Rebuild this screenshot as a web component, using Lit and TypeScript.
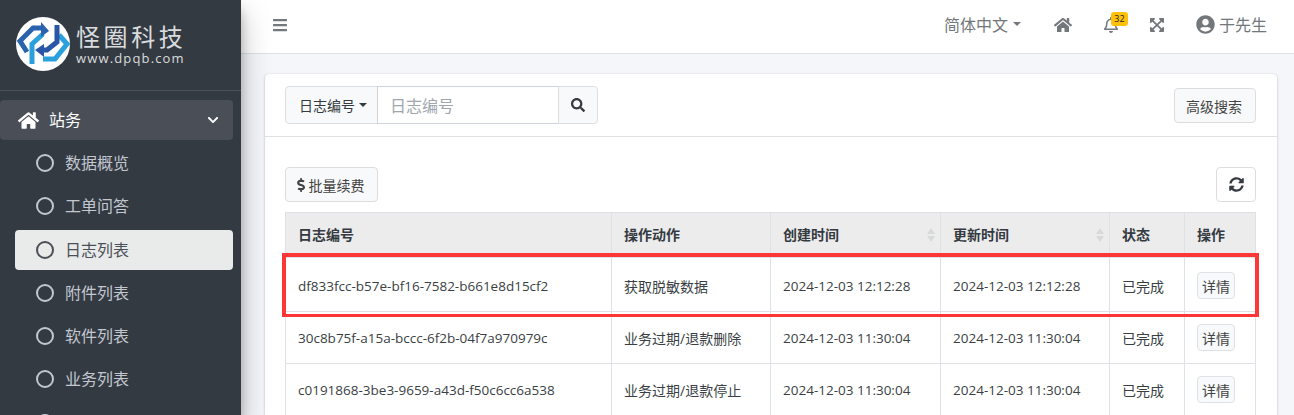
import { LitElement, html, css, svg } from "lit";
import { customElement } from "lit/decorators.js";

const P = {
  home: ["0 0 576 512", "M280.37 148.26L96 300.11V464a16 16 0 0 0 16 16l112.06-.29a16 16 0 0 0 15.92-16V368a16 16 0 0 1 16-16h64a16 16 0 0 1 16 16v95.64a16 16 0 0 0 16 16.05L464 480a16 16 0 0 0 16-16V300L295.67 148.26a12.19 12.19 0 0 0-15.3 0zM571.6 251.47L488 182.56V44.05a12 12 0 0 0-12-12h-56a12 12 0 0 0-12 12v72.61L318.47 43a48 48 0 0 0-61 0L4.34 251.47a12 12 0 0 0-1.6 16.9l25.5 31A12 12 0 0 0 45.15 301l235.22-193.74a12.19 12.19 0 0 1 15.3 0L530.9 301a12 12 0 0 0 16.9-1.6l25.5-31a12 12 0 0 0-1.7-16.93z"],
  search: ["0 0 512 512", "M505 442.7L405.3 343c-4.5-4.5-10.6-7-17-7H372c27.6-35.3 44-79.7 44-128C416 93.1 322.9 0 208 0S0 93.1 0 208s93.1 208 208 208c48.3 0 92.7-16.4 128-44v16.3c0 6.4 2.5 12.5 7 17l99.7 99.7c9.4 9.4 24.6 9.4 33.9 0l28.3-28.3c9.4-9.4 9.4-24.6.1-34zM208 336c-70.7 0-128-57.2-128-128 0-70.7 57.2-128 128-128 70.7 0 128 57.2 128 128 0 70.7-57.2 128-128 128z"],
  chevron: ["0 0 448 512", "M207.029 381.476L12.686 187.132c-9.373-9.373-9.373-24.569 0-33.941l22.667-22.667c9.357-9.357 24.522-9.375 33.901-.04L224 284.505l154.745-154.021c9.379-9.335 24.544-9.317 33.901.04l22.667 22.667c9.373 9.373 9.373 24.569 0 33.941L240.971 381.476c-9.373 9.372-24.569 9.372-33.942 0z"],
  user: ["0 0 496 512", "M248 8C111 8 0 119 0 256s111 248 248 248 248-111 248-248S385 8 248 8zm0 96c48.6 0 88 39.4 88 88s-39.4 88-88 88-88-39.4-88-88 39.4-88 88-88zm0 344c-58.7 0-111.3-26.6-146.5-68.2 18.8-35.4 55.6-59.8 98.5-59.8 2.4 0 4.8.4 7.1 1.1 13 4.2 26.6 6.9 40.9 6.9 14.3 0 28-2.7 40.9-6.9 2.3-.7 4.7-1.1 7.1-1.1 42.9 0 79.7 24.4 98.5 59.8C359.3 421.4 306.7 448 248 448z"],
  sync: ["0 0 512 512", "M370.72 133.28C339.458 104.008 298.888 87.962 255.848 88c-77.458.068-144.328 53.178-162.791 126.85-1.344 5.363-6.122 9.15-11.651 9.15H24.103c-7.498 0-13.194-6.807-11.807-14.176C33.933 94.924 134.813 8 256 8c66.448 0 126.791 26.136 171.315 68.685L463.03 40.97C478.149 25.851 504 36.559 504 57.941V192c0 13.255-10.745 24-24 24H345.941c-21.382 0-32.09-25.851-16.971-40.971l41.75-41.749zM32 296h134.059c21.382 0 32.09 25.851 16.971 40.971l-41.75 41.75c31.262 29.273 71.835 45.319 114.876 45.28 77.418-.07 144.315-53.144 162.787-126.849 1.344-5.363 6.122-9.15 11.651-9.15h57.304c7.498 0 13.194 6.807 11.807 14.176C478.067 417.076 377.187 504 256 504c-66.448 0-126.791-26.136-171.315-68.685L48.97 471.03C33.851 486.149 8 475.441 8 454.059V320c0-13.255 10.745-24 24-24z"],
  expand: ["0 0 448 512", "M448 344v112a23.94 23.94 0 0 1-24 24H312c-21.39 0-32.09-25.9-17-41l36.2-36.2L224 295.6 116.77 402.9 153 439c15.09 15.1 4.39 41-17 41H24a23.94 23.94 0 0 1-24-24V344c0-21.4 25.89-32.1 41-17l36.19 36.2L184.46 256 77.18 148.7 41 185c-15.1 15.1-41 4.4-41-17V56a23.94 23.94 0 0 1 24-24h112c21.39 0 32.09 25.9 17 41l-36.2 36.2L224 216.4l107.23-107.3L295 73c-15.09-15.1-4.39-41 17-41h112a23.94 23.94 0 0 1 24 24v112c0 21.4-25.89 32.1-41 17l-36.19-36.2L263.54 256l107.28 107.3L407 327.1c15.1-15.2 41-4.5 41 16.9z"],
  bars: ["0 0 448 512", "M16 132h416c8.837 0 16-7.163 16-16V76c0-8.837-7.163-16-16-16H16C7.163 60 0 67.163 0 76v40c0 8.837 7.163 16 16 16zm0 160h416c8.837 0 16-7.163 16-16v-40c0-8.837-7.163-16-16-16H16c-8.837 0-16 7.163-16 16v40c0 8.837 7.163 16 16 16zm0 160h416c8.837 0 16-7.163 16-16v-40c0-8.837-7.163-16-16-16H16c-8.837 0-16 7.163-16 16v40c0 8.837 7.163 16 16 16z"],
  bell: ["0 0 448 512", "M439.39 362.29c-19.32-20.76-55.47-51.99-55.47-154.29 0-77.7-54.48-139.9-127.94-155.16V32c0-17.67-14.32-32-31.98-32s-31.98 14.33-31.98 32v20.84C118.56 68.1 64.08 130.3 64.08 208c0 102.3-36.15 133.53-55.47 154.29-6 6.45-8.66 14.16-8.61 21.71.11 16.4 12.98 32 32.1 32h383.8c19.12 0 32-15.6 32.1-32 .05-7.55-2.61-15.27-8.61-21.71zM67.53 368c21.22-27.97 44.42-74.33 44.53-159.42 0-.2-.06-.38-.06-.58 0-61.86 50.14-112 112-112s112 50.14 112 112c0 .2-.06.38-.06.58.11 85.1 23.31 131.46 44.53 159.42H67.53zM224 512c35.32 0 63.97-28.65 63.97-64H160.03c0 35.35 28.65 64 63.97 64z"],
  dollar: ["0 0 320 512", "M209.2 233.4l-108-31.6C88.7 198.2 80 186.5 80 173.5c0-16.3 13.2-29.5 29.5-29.5h66.3c12.2 0 24.2 3.7 34.2 10.5 6.1 4.1 14.3 3.1 19.5-2l34.8-34c7.1-6.9 6.1-18.4-1.8-24.5C238 74.8 207.4 64.1 176 64V16c0-8.8-7.2-16-16-16h-32c-8.8 0-16 7.2-16 16v48h-2.5C45.8 64-5.4 118.7.5 183.6c4.2 46.1 39.4 83.6 83.8 96.6l102.5 30c12.5 3.7 21.2 15.3 21.2 28.3 0 16.3-13.2 29.5-29.5 29.5h-66.3C100 368 88 364.3 78 357.5c-6.1-4.1-14.3-3.1-19.5 2l-34.8 34c-7.1 6.9-6.1 18.4 1.8 24.5 24.5 19.2 55.1 29.9 86.5 30v48c0 8.8 7.2 16 16 16h32c8.8 0 16-7.2 16-16v-48.2c46.6-.9 90.3-28.6 105.7-72.7 21.5-61.6-14.6-124.8-72.5-141.7z"],
} as const;

const icon = (k: keyof typeof P, size: number) =>
  html`<svg class="ic" width=${size} height=${size} viewBox=${P[k][0]} fill="currentColor">${svg`<path d=${P[k][1]}></path>`}</svg>`;

const ROWS = [
  ["df833fcc-b57e-bf16-7582-b661e8d15cf2", "获取脱敏数据", "2024-12-03 12:12:28"],
  ["30c8b75f-a15a-bccc-6f2b-04f7a970979c", "业务过期/退款删除", "2024-12-03 11:30:04"],
  ["c0191868-3be3-9659-a43d-f50c6cc6a538", "业务过期/退款停止", "2024-12-03 11:30:04"],
];
const MENU = ["数据概览", "工单问答", "日志列表", "附件列表", "软件列表", "业务列表", ""];

@customElement("app-root")
export class AppRoot extends LitElement {
  static styles = css`
    :host {
      display: grid;
      grid-template-columns: 241px 1fr;
      height: 415px;
      overflow: hidden;
      font-family: "Open Sans", "Noto Sans CJK SC", sans-serif;
      font-size: 14px;
      color: #212529;
      background: #f4f6f9;
    }
    .ic { display: block; flex: none; }
    .side {
      background: #343a42;
      color: #c2c7d0;
      box-shadow: 0 14px 28px rgba(0,0,0,.25), 0 10px 10px rgba(0,0,0,.22);
      z-index: 2;
      overflow: hidden;
    }
    .brand {
      height: 91px;
      box-sizing: border-box;
      border-bottom: 1px solid #4b545c;
      display: flex;
      align-items: center;
      gap: 6px;
      padding: 0 0 2px 16px;
    }
    .brand svg { flex: none; }
    .bt { display: flex; flex-direction: column; color: #d9dcdf; }
    .bt b { font-weight: 400; font-size: 24px; line-height: 28px; letter-spacing: 3.6px; white-space: nowrap; }
    .bt small { font-size: 13px; line-height: 15px; letter-spacing: 1.15px; white-space: nowrap; }
    .menu { display: flex; flex-direction: column; padding: 9px 8px 0 0; }
    .group {
      height: 40px;
      border-radius: 4px;
      background: #494e57;
      color: #fff;
      display: flex;
      align-items: center;
      padding: 0 14px 0 18px;
      font-size: 16px;
      margin-bottom: 3px;
      flex: none;
    }
    .group span { margin-left: 10px; flex: 1; padding-bottom: 2px; }
    .item {
      height: 40px;
      margin: 0 0 3.25px 15px;
      border-radius: 4px;
      display: flex;
      align-items: center;
      padding-left: 21px;
      font-size: 16px;
      gap: 11px;
      flex: none;
    }
    .item em { font-style: normal; padding-bottom: 2px; }
    .item i {
      width: 18px; height: 18px; box-sizing: border-box;
      border: 2.5px solid currentColor; border-radius: 50%;
      flex: none;
    }
    .item.on { background: #e9eaea; color: #495057; }

    .main { display: flex; flex-direction: column; min-width: 0; }
    .nav {
      height: 54px; box-sizing: border-box; flex: none;
      background: #fff;
      border-bottom: 1px solid #dee2e6;
      display: flex; align-items: center;
      padding: 0 27px 3px 31px;
      color: #72777c;
    }
    .nav .sp { flex: 1; }
    .lang { display: flex; align-items: center; font-size: 16px; gap: 5px; padding-bottom: 2px; }
    .caret { width: 0; height: 0; border: 4.5px solid transparent; border-top-color: currentColor; border-bottom: 0; }
    .home { margin-left: 33px; }
    .bell { margin-left: 31px; position: relative; }
    .badge {
      position: absolute; left: 8px; top: -5px;
      background: #ffc107; color: #212529; font-size: 9px; line-height: 14px; height: 14px;
      width: 17px; text-align: center; border-radius: 3px; font-weight: 400;
    }
    .exp { margin-left: 30px; }
    .user { margin-left: 31px; display: flex; align-items: center; gap: 4px; font-size: 16px; padding-bottom: 2px; }

    .content { padding: 20px 17px 0 24px; }
    .card {
      background: #fff; border-radius: 4px 4px 0 0;
      box-shadow: 0 0 1px rgba(0,0,0,.125), 0 1px 3px rgba(0,0,0,.2);
      position: relative;
    }
    .chead {
      height: 63px; box-sizing: border-box;
      border-bottom: 1px solid #dfe1e4;
      padding: 12px 21px 0 20px;
      display: flex; justify-content: space-between; align-items: flex-start;
    }
    .ig { display: flex; height: 38px; }
    .ig > * { box-sizing: border-box; border: 1px solid #ced4da; height: 38px; display: flex; align-items: center; }
    .sel { width: 93px; border-radius: 4px 0 0 4px; background: #f8f9fa; padding-left: 13px; gap: 4px; border-color: #dcdfe2; color: #343a40; }
    .inp { width: 182px; margin-left: -1px; padding-left: 12px; font-size: 16px; color: #9fa6ad; }
    .go { width: 40px; margin-left: -1px; border-radius: 0 4px 4px 0; justify-content: center; background: #f8f9fa; border-color: #dcdfe2; color: #343a40; }
    .btn {
      box-sizing: border-box; background: #f8f9fa; border: 1px solid #ddd; border-radius: 4px;
      display: flex; align-items: center; justify-content: center; color: #444;
    }
    .adv { width: 82px; height: 35px; margin-top: 2px; padding-right: 2px; }
    .cbody { padding: 30px 21px 0 20px; }
    .tools { display: flex; justify-content: space-between; height: 35px; margin-bottom: 10px; }
    .bulk { width: 93px; gap: 3px; padding-right: 2px; }
    .bulk svg { width: 9px; height: 14px; }
    .ref { width: 40px; background: #fff; color: #343a40; }
    table { border-collapse: collapse; width: 970px; table-layout: fixed; }
    th, td { border: 1px solid #dee2e6; padding: 0 0 0 12px; text-align: left; white-space: nowrap; }
    th { background: #ececed; height: 42px; border-bottom: 3px solid #dee2e6; font-weight: 700; position: relative; color: #343a40; }
    td { height: 51px; font-size: 14px; color: #3a3f44; }
    tr:first-child td { height: 51px; padding-top: 2px; }
    .id { font-size: 13.5px; }
    .sort { position: absolute; right: 5px; top: 15px; width: 8px; display: flex; flex-direction: column; gap: 2px; }
    .sort u { width: 0; height: 0; border: 4px solid transparent; }
    .sort u:first-child { border-bottom: 6px solid #d8d9da; border-top: 0; }
    .sort u:last-child { border-top: 6px solid #d8d9da; border-bottom: 0; }
    .det { width: 38px; height: 27px; font-size: 14px; background: #f8f9fa; border: 1px solid #dee2e6; }
    .mark {
      position: absolute; left: 17px; top: 179px; width: 977px; height: 64px; box-sizing: border-box;
      border: 4px solid #ff3636; border-bottom-width: 3px; pointer-events: none;
    }
  `;

  render() {
    return html`
      <aside class="side">
        <div class="brand">
          <svg width="54" height="54" viewBox="0 0 54 54">
            <circle cx="27" cy="27" r="27" fill="#fff"></circle>
            <g fill="none" stroke-width="5">
              <path d="M16 47 L16 27 L27 17" stroke="#2aa0dc"></path>
              <path d="M11 35 L4 24 L17 11 L26 11" stroke="#2a62ad"></path>
              <path d="M43 18 L51 27 L39 42 L27 42" stroke="#2aa0dc"></path>
              <path d="M41 8 L41 25 L31 33 L25 33" stroke="#2a56a8"></path>
            </g>
            <path d="M25 5 L33 14 L25 20 Z" fill="#2a62ad"></path>
            <path d="M28 27 L19 33 L28 40 Z" fill="#2a56a8"></path>
          </svg>
          <div class="bt"><b>怪圈科技</b><small>www.dpqb.com</small></div>
        </div>
        <nav class="menu">
          <div class="group">${icon("home", 21)}<span>站务</span>${icon("chevron", 12)}</div>
          ${MENU.map((m, i) => html`<div class="item ${i === 2 ? "on" : ""}"><i></i>${m ? html`<em>${m}</em>` : ""}</div>`)}
        </nav>
      </aside>
      <div class="main">
        <header class="nav">
          ${icon("bars", 16)}
          <div class="sp"></div>
          <div class="lang">简体中文<span class="caret"></span></div>
          <div class="home">${icon("home", 18)}</div>
          <div class="bell">${icon("bell", 16)}<span class="badge">32</span></div>
          <div class="exp">${icon("expand", 16)}</div>
          <div class="user">${icon("user", 19)}于先生</div>
        </header>
        <div class="content">
          <section class="card">
            <div class="chead">
              <div class="ig">
                <div class="sel">日志编号<span class="caret"></span></div>
                <div class="inp">日志编号</div>
                <div class="go">${icon("search", 14)}</div>
              </div>
              <div class="btn adv">高级搜索</div>
            </div>
            <div class="cbody">
              <div class="tools">
                <div class="btn bulk">${icon("dollar", 13)}批量续费</div>
                <div class="btn ref">${icon("sync", 15)}</div>
              </div>
              <table>
                <colgroup><col style="width:326px"><col style="width:159px"><col style="width:170px"><col style="width:169px"><col style="width:75px"><col style="width:71px"></colgroup>
                <thead><tr>
                  <th>日志编号</th><th>操作动作</th>
                  <th>创建时间<span class="sort"><u></u><u></u></span></th>
                  <th>更新时间<span class="sort"><u></u><u></u></span></th>
                  <th>状态</th><th>操作</th>
                </tr></thead>
                <tbody>
                  ${ROWS.map(r => html`<tr>
                    <td class="id">${r[0]}</td><td>${r[1]}</td><td class="id">${r[2]}</td><td class="id">${r[2]}</td>
                    <td>已完成</td><td><div class="btn det">详情</div></td>
                  </tr>`)}
                </tbody>
              </table>
            </div>
            <div class="mark"></div>
          </section>
        </div>
      </div>
    `;
  }
}
